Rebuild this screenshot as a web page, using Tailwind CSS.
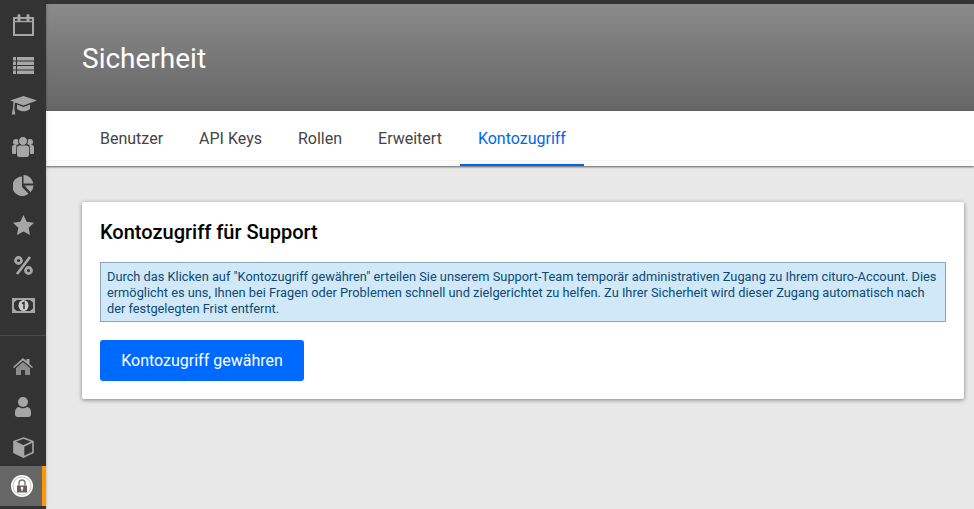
<!DOCTYPE html>
<html lang="de">
<head>
<meta charset="UTF-8">
<title>Sicherheit</title>
<script src="https://cdn.jsdelivr.net/npm/@tailwindcss/browser@4"></script>
</head>
<body class="bg-[#e8e8e8] font-['Roboto',sans-serif] overflow-hidden">
<div class="flex h-[509px] w-[974px] overflow-hidden">
  <!-- sidebar -->
  <aside class="w-[46px] shrink-0 bg-[#333] text-[#a6a6a6] flex flex-col pt-[5px] relative z-10 shadow-[1px_0_2px_rgba(0,0,0,0.15)]">
    <div class="h-[40px] flex items-center justify-center">
      <svg width="21" height="22" viewBox="0 0 21 22" fill="none" stroke="currentColor" stroke-width="2"><path d="M1 4h19v17H1z"/><path d="M1 7.500h19" stroke-width="1.500"/><path d="M6 1.500v5M15 1.500v5" stroke-width="3" stroke-linecap="round"/></svg>
    </div>
    <div class="h-[40px] flex items-center justify-center">
      <svg width="21" height="17" viewBox="0 0 21 17" fill="currentColor"><path d="M0 0h3v3.500H0zM4 0h17v3.500H4zM0 4.500h3V8H0zM4 4.500h17V8H4zM0 9h3v3.500H0zM4 9h17v3.500H4zM0 13.500h3V17H0zM4 13.500h17V17H4z"/></svg>
    </div>
    <div class="h-[40px] flex items-center justify-center pt-[1px]">
      <svg width="27" height="19" viewBox="0 0 27 19" fill="currentColor"><path d="M13.500 0 27 4.500 13.500 9.500 5 6.500 4.300 12l1 6.500H1.800L3 12l.5-6.500L0 4.500z"/><path d="M7 8.500l6.500 2.500L20 8.500v4.500c-2 1.700-4.500 2.300-6.500 2.300S9 14.700 7 13z"/></svg>
    </div>
    <div class="h-[40px] flex items-center justify-center pt-[2px]">
      <svg width="22" height="21" viewBox="0 0 22 21" fill="currentColor"><circle cx="4" cy="6" r="3"/><circle cx="18" cy="6" r="3"/><circle cx="11" cy="5" r="4.500" stroke="#333" stroke-width="1"/><path d="M0 11c0-1 .7-2 2-2h2.500L4 18H1.500C.5 18 0 17.500 0 16.500zM22 11c0-1-.7-2-2-2h-2.500L18 18h2.500c1 0 1.500-.5 1.500-1.500z"/><path d="M5 12c0-1.500 1-2.500 2.500-2.500h7c1.500 0 2.500 1 2.500 2.500v7c0 1-1 2-2 2H7c-1 0-2-1-2-2z"/></svg>
    </div>
    <div class="h-[40px] flex items-center justify-center">
      <svg width="21" height="21" viewBox="0 0 21 21" fill="currentColor"><path d="M9 1.500V12l6.500 6.800A9.800 9.800 0 1 1 9 1.500z"/><path d="M10.500 0a9.800 9.800 0 0 1 9.800 8.500h-9.800z"/><path d="M11.500 10.500h9a9.800 9.800 0 0 1-3 6.800z"/></svg>
    </div>
    <div class="h-[40px] flex items-center justify-center">
      <svg width="21" height="20" viewBox="0 0 21 20" fill="currentColor"><path d="M10.500 0l3.200 6.700 7.300 1-5.300 5 1.300 7.300-6.500-3.500L4 20l1.300-7.300L0 7.700l7.300-1z"/></svg>
    </div>
    <div class="h-[40px] flex items-center justify-center pt-[1px]">
      <svg width="19" height="19" viewBox="0 0 19 19" fill="none" stroke="currentColor" stroke-width="2.800"><path d="M16 1 3 18"/><circle cx="4.500" cy="4.500" r="3"/><circle cx="14.500" cy="14.500" r="3"/></svg>
    </div>
    <div class="h-[40px] flex items-center justify-center pt-[1px]">
      <svg width="23" height="15" viewBox="0 0 23 15"><path fill="currentColor" fill-rule="evenodd" d="M0 0h23v15H0zM5 2 2 4.500v6L5 13h13l3-2.500v-6L18 2z"/><ellipse cx="11.500" cy="7.500" rx="5" ry="5.500" fill="#ccc"/><path d="M10 5.500l2-1v6.500" fill="none" stroke="#333" stroke-width="1.500"/></svg>
    </div>
    <div class="mt-[10px] h-px bg-[#4a4a4a]"></div>
    <div class="h-[10px]"></div>
    <div class="h-[40px] flex items-center justify-center">
      <svg width="20" height="17" viewBox="0 0 20 17"><path fill="#a6a6a6" d="M10 0l3.500 3V1h3v5L20 9l-1 1-9-7.500L1 10 0 9z"/><path fill="#8c8c8c" d="M10 4l7 6v7h-5v-5H8v5H3v-7z"/></svg>
    </div>
    <div class="h-[40px] flex items-center justify-center pt-[1px]">
      <svg width="16" height="20" viewBox="0 0 16 20" fill="currentColor"><circle cx="8" cy="5" r="5"/><path d="M0 15c0-3 2-5 4-5 1 .8 2.500 1.300 4 1.300s3-.5 4-1.300c2 0 4 2 4 5v2c0 2-1 3-3 3H3c-2 0-3-1-3-3z"/></svg>
    </div>
    <div class="h-[40px] flex items-center justify-center pt-[2px]">
      <svg width="21" height="21" viewBox="0 0 21 21"><path fill="#a6a6a6" d="M1 5l9.500 4.500V20L1 15.500z"/><path d="M10.500 1 20 4.500v11L10.500 20 1 15.500v-11zM1 4.500l9.500 4.500L20 4.500M10.500 9v11" fill="none" stroke="#a6a6a6" stroke-width="1.600"/></svg>
    </div>
    <div class="h-[40px] bg-[#666] border-r-4 border-[#ff9800] flex items-center justify-center pl-[1px]">
      <svg width="22" height="22" viewBox="0 0 22 22"><circle cx="11" cy="11" r="11" fill="#fff"/><circle cx="11" cy="11" r="9" fill="#fff" stroke="#aaa" stroke-width="0.700"/><path d="M8 10.500V8a3 3 0 0 1 6 0v2.500" fill="none" stroke="#777" stroke-width="1.400"/><path fill="#6a5a5a" d="M6 10.500h10v7H6z"/><circle cx="11" cy="13" r="1.300" fill="#fff"/><path fill="#fff" d="M10.400 13.500h1.200v2.500h-1.200z"/></svg>
    </div>
  </aside>
  <div class="flex-1 min-w-0 flex flex-col">
    <header class="h-[111px] shrink-0 bg-gradient-to-b from-[#8a8a8a] to-[#666] border-t-4 border-[#333] flex items-center pl-[36px] pt-[2px]">
      <h1 class="text-[28px] leading-none text-white">Sicherheit</h1>
    </header>
    <nav class="h-[55px] shrink-0 bg-[linear-gradient(#fff_49px,#f0f0f0_49px,#fafafa_50px)] flex pl-[36px] text-[16px] text-[#444] shadow-[0_1px_2px_rgba(0,0,0,0.6)] relative">
      <a class="px-[18px] pt-[16px]">Benutzer</a>
      <a class="px-[18px] pt-[16px]">API Keys</a>
      <a class="px-[18px] pt-[16px]">Rollen</a>
      <a class="px-[18px] pt-[16px]">Erweitert</a>
      <a class="px-[18px] pt-[16px] text-[#0066ee] border-b-2 border-[#0066ee]">Kontozugriff</a>
    </nav>
    <main class="pt-[36px] pl-[36px] pr-[10px]">
      <section class="bg-white rounded-[2px] shadow-[0_1px_4px_rgba(0,0,0,0.45)] h-[197px] px-[18px] pt-[18px]">
        <h2 class="text-[20px] leading-[24px] font-medium text-black">Kontozugriff für Support</h2>
        <div class="mt-[18px] h-[60px] bg-[#d1e8f8] border border-[#8ba5b8] px-[6px] py-[6px] text-[12.8px] leading-[16px] text-[#0c4a77]">Durch das Klicken auf "Kontozugriff gewähren" erteilen Sie unserem Support-Team temporär administrativen Zugang zu Ihrem cituro-Account. Dies ermöglicht es uns, Ihnen bei Fragen oder Problemen schnell und zielgerichtet zu helfen. Zu Ihrer Sicherheit wird dieser Zugang automatisch nach der festgelegten Frist entfernt.</div>
        <button class="mt-[18px] w-[204px] h-[41px] rounded-[3px] bg-[#0069ff] text-white text-[16px]">Kontozugriff gewähren</button>
      </section>
    </main>
  </div>
</div>
</body>
</html>
